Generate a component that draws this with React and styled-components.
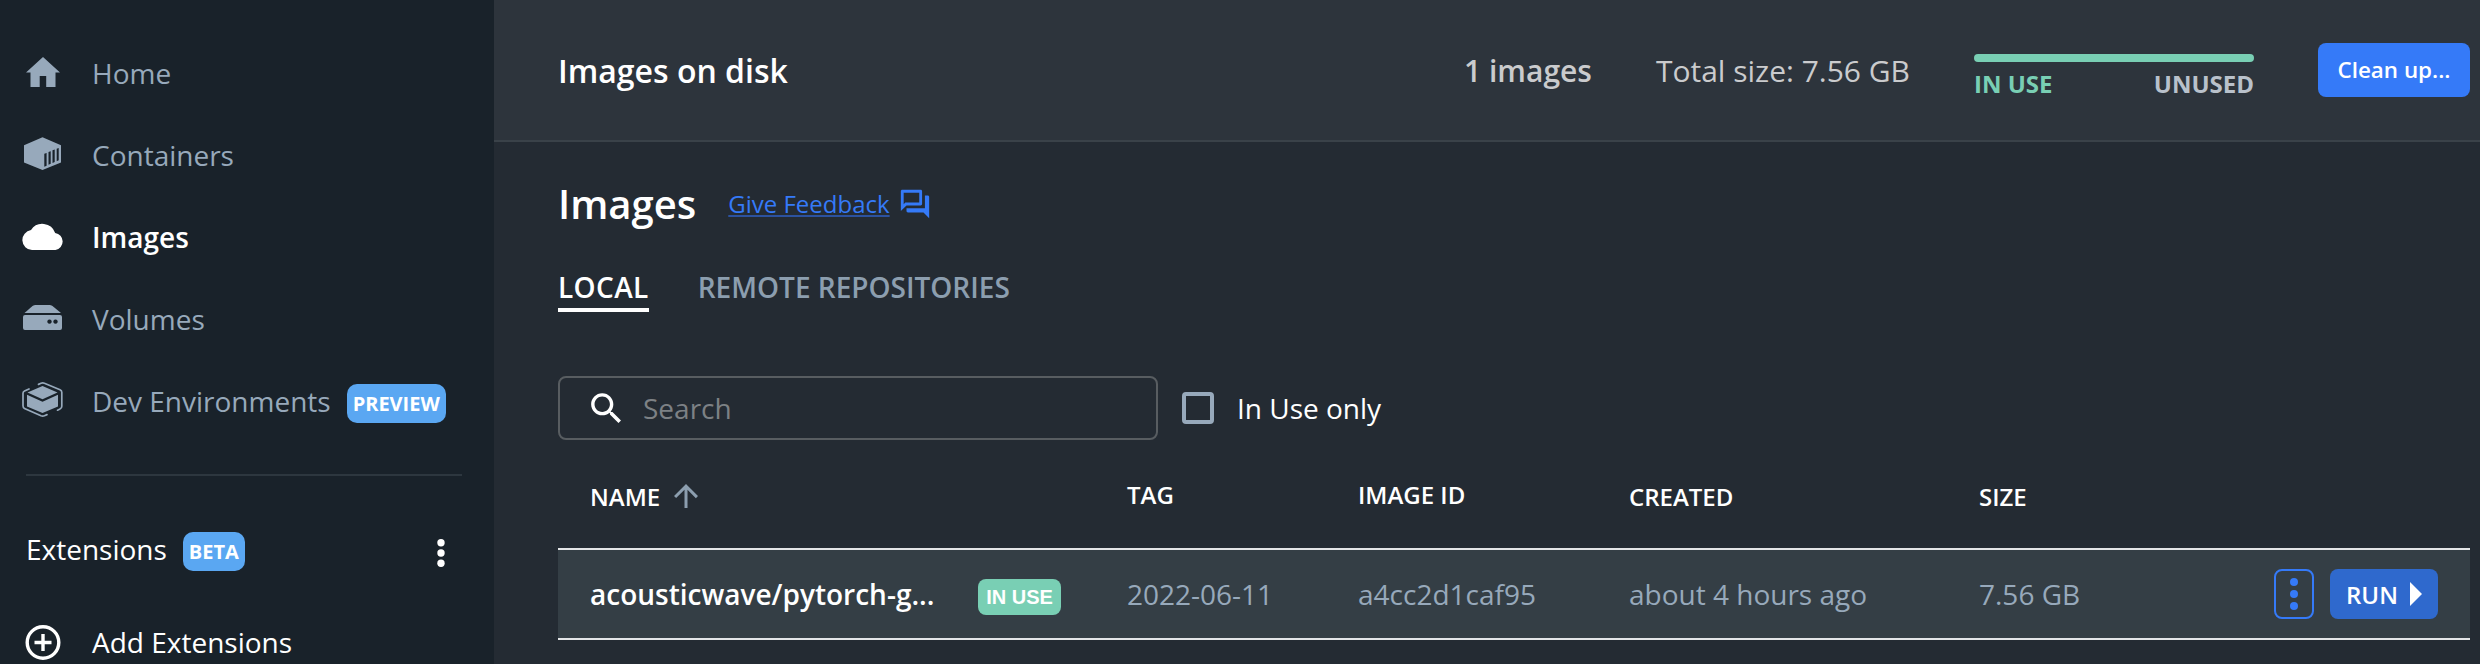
import React from "react";
import styled, { createGlobalStyle } from "styled-components";

const GlobalStyle = createGlobalStyle`
  *, *::before, *::after { box-sizing: border-box; }
  body {
    margin: 0;
    background: #242b33;
    color: #fff;
    font-family: "Open Sans", "Liberation Sans", sans-serif;
    font-size: 28px;
    overflow: hidden;
  }
  h1, h2, p { margin: 0; }
`;

const Shell = styled.div`
  display: flex;
  width: 2480px;
  height: 664px;
  overflow: hidden;
`;

/* Sidebar */
const Sidebar = styled.aside`
  flex: none;
  width: 494px;
  background: #19222a;
  padding-top: 32px;
`;

const NavItem = styled.div`
  display: flex;
  align-items: center;
  height: 82px;
  padding-left: 22px;
  color: ${(p) => (p.$active ? "#fff" : "#97a9bb")};
  font-weight: ${(p) => (p.$active ? 600 : 400)};
  white-space: nowrap;
`;

const NavIcon = styled.svg`
  flex: none;
  width: 42px;
  height: 42px;
  margin-right: 28px;
`;

const NavLabel = styled.span`
  white-space: nowrap;
`;

const BlueTag = styled.span`
  display: flex;
  align-items: center;
  justify-content: center;
  width: ${(p) => p.$width}px;
  height: 39px;
  margin: 5px 0 0 16px;
  border-radius: 10px;
  background: #5aa7f2;
  color: #fff;
  font-size: 20px;
  font-weight: 700;
`;

const Divider = styled.div`
  height: 2px;
  margin: 32px 32px 0 26px;
  background: #2d373f;
`;

const ExtensionsRow = styled.div`
  display: flex;
  align-items: center;
  height: 78px;
  margin-top: 34px;
  padding: 0 47px 0 26px;
`;

const DotsIcon = styled.svg`
  width: 12px;
  height: 32px;
  margin: 8px 0 0 auto;
`;

const AddRow = styled(NavItem)`
  height: 82px;
  margin-top: 13px;
  color: #fff;
`;

/* Header bar */
const Main = styled.main`
  flex: 1;
  min-width: 0;
`;

const TopBar = styled.header`
  display: flex;
  align-items: center;
  height: 142px;
  padding: 0 10px 0 64px;
  background: #2d343c;
  border-bottom: 2px solid #3a4249;
  white-space: nowrap;
`;

const TopTitle = styled.h2`
  font-size: 32px;
  font-weight: 600;
`;

const Stat = styled.span`
  font-size: 30px;
  font-weight: ${(p) => (p.$strong ? 600 : 400)};
  color: #cacbcd;
  margin-left: ${(p) => (p.$first ? "auto" : "64px")};
`;

const Usage = styled.div`
  width: 280px;
  height: 46px;
  margin: 14px 64px 0 64px;
`;

const UsageBar = styled.div`
  height: 8px;
  border-radius: 4px;
  background: #79cfb4;
`;

const UsageLabels = styled.div`
  display: flex;
  justify-content: space-between;
  padding-top: 6px;
  line-height: 32px;
  font-size: 24px;
  font-weight: 700;
  color: #b9c1cb;
`;

const InUseLabel = styled.span`
  color: #79cfb4;
`;

const CleanButton = styled.button`
  width: 152px;
  height: 54px;
  padding: 0 0 1px;
  border: 0;
  border-radius: 8px;
  background: #357af8;
  color: #fff;
  font: 600 22.4px "Open Sans", sans-serif;
`;

/* Content */
const Content = styled.div`
  padding: 0 10px 0 64px;
`;

const Heading = styled.div`
  display: flex;
  align-items: center;
  height: 124px;
`;

const Title = styled.h1`
  font-size: 40px;
  font-weight: 600;
  line-height: 54px;
`;

const FeedbackLink = styled.a`
  display: flex;
  align-items: center;
  margin-left: 32px;
  color: #357af8;
  font-size: 24px;
  line-height: 34px;
`;

const FeedbackText = styled.span`
  text-decoration: underline;
  text-decoration-color: #2c529f;
  text-decoration-thickness: 2px;
  text-underline-offset: 2px;
`;

const ForumIcon = styled.svg`
  width: 34px;
  height: 34px;
  margin-left: 8px;
`;

const Tabs = styled.div`
  display: flex;
  gap: 49px;
  height: 46px;
`;

const Tab = styled.div`
  height: 46px;
  line-height: 42px;
  font-weight: 600;
  letter-spacing: ${(p) => (p.$active ? 0.4 : 0)}px;
  color: ${(p) => (p.$active ? "#fff" : "#8c9eaf")};
  border-bottom: 4px solid ${(p) => (p.$active ? "#fff" : "transparent")};
`;

const Filters = styled.div`
  display: flex;
  align-items: center;
  height: 64px;
  margin-top: 64px;
`;

const SearchBox = styled.div`
  display: flex;
  align-items: center;
  width: 600px;
  height: 64px;
  padding-left: 26px;
  border: 2px solid #585d61;
  border-radius: 8px;
  color: #7d8185;
`;

const SearchIcon = styled.svg`
  width: 41px;
  height: 41px;
  margin-right: 16px;
`;

const CheckBox = styled.span`
  width: 32px;
  height: 32px;
  margin: 0 23px 0 24px;
  border: 4px solid #97a9bb;
  border-radius: 4px;
`;

const Columns = styled.div`
  display: grid;
  grid-template-columns: 537px 231px 271px 350px 1fr auto;
  align-items: center;
  padding: 0 32px;
`;

const TableHead = styled(Columns)`
  height: 108px;
  font-size: 24px;
  font-weight: 600;
`;

const HeadCell = styled.div`
  display: flex;
  align-items: center;
  padding-top: ${(p) => (p.$sortable ? 4 : 0)}px;
`;

const ArrowIcon = styled.svg`
  width: 36px;
  height: 36px;
  margin-left: 8px;
`;

const TableRow = styled(Columns)`
  height: 92px;
  background: #343e45;
  border: solid #e3e5e7;
  border-width: 2px 0;
  color: #97a9bb;
`;

const NameCell = styled.div`
  display: flex;
  align-items: center;
  color: #fff;
  font-weight: 600;
`;

const ImageName = styled.span`
  width: 388px;
`;

const StatusTag = styled.span`
  display: flex;
  align-items: center;
  justify-content: center;
  width: 83px;
  height: 36px;
  margin-top: 6px;
  border-radius: 8px;
  background: #79cfb4;
  color: #fff;
  font: 700 20px "Liberation Sans", Arial, sans-serif;
`;

const Actions = styled.div`
  display: flex;
  gap: 16px;
`;

const MoreButton = styled.button`
  display: flex;
  align-items: center;
  justify-content: center;
  width: 40px;
  height: 50px;
  padding: 0;
  border: 2px solid #357af8;
  border-radius: 8px;
  background: transparent;
`;

const RunButton = styled.button`
  display: flex;
  align-items: center;
  justify-content: space-between;
  width: 108px;
  height: 50px;
  padding: 0 16px;
  border: 0;
  border-radius: 8px;
  background: #2f69cd;
  color: #fff;
  font: 600 24px "Open Sans", sans-serif;
`;

const HomeGlyph = () => (
  <NavIcon viewBox="0 0 42 42" fill="currentColor">
    <path d="M21 5 38 20.500h-4.500V35h-9.300V24h-6.500v11H8.500V20.500H4z" />
  </NavIcon>
);

const ContainersGlyph = () => (
  <NavIcon viewBox="0 0 42 42" fill="currentColor">
    <path
      fillRule="evenodd"
      d="M20.500 3.300 39 11.200V28.500L20.500 36 2 28.500V11.200zM22.300 19.700v13l2.300-1V18.900zM26.500 18v12.700l2.200-1V17.200zM30.500 16.200v12.700l2.200-1V15.400zM34.700 14.700V27.200l2-1V14z"
    />
  </NavIcon>
);

const CloudGlyph = () => (
  <NavIcon viewBox="0 0 42 42" fill="currentColor">
    <path d="M10 34A10 10 0 0 1 9 14.100 13.500 13.500 0 0 1 33.200 17 8.600 8.600 0 0 1 33.500 34z" />
  </NavIcon>
);

const VolumesGlyph = () => (
  <NavIcon viewBox="0 0 42 42" fill="currentColor">
    <path d="M2.500 15 10.500 8Q12 7 13.500 7h14Q29 7 30.500 8L39 15z" />
    <path
      fillRule="evenodd"
      d="M3 17h35q2 0 2 2V30q0 2-2 2H3q-2 0-2-2V19q0-2 2-2zM27.500 21.400a2.200 2.200 0 1 0 .01 0zM33.500 21.400a2.200 2.200 0 1 0 .01 0z"
    />
  </NavIcon>
);

const DevGlyph = () => (
  <NavIcon viewBox="0 0 42 42" fill="currentColor">
    <path d="M20.500 6 35.500 12.500 20.500 19.200 5.500 12.500z" />
    <path d="M5 14.800 20.500 21.800 36 14.800V26.500L20.500 33 5 26.500z" />
    <g fill="none" stroke="currentColor" strokeWidth="1.700" strokeLinecap="round">
      <path d="M16.500 4.400 19 3.300q1.700-.7 3.400 0L38 9.800Q39.800 10.700 39.800 12.200V26.200Q39.800 28.200 38 29L35.500 30.200" />
      <path d="M7 9 2.500 11Q1 11.700 1 13.200V25.700Q1 27.700 2.500 28.400L19 35.700q1.700.7 3.400 0L25 34.600" />
    </g>
  </NavIcon>
);

const AddGlyph = () => (
  <NavIcon viewBox="0 0 42 42" fill="none" stroke="currentColor">
    <circle cx="21" cy="21.500" r="15.800" strokeWidth="3.400" />
    <path d="M21 13v17M12.500 21.500h17" strokeWidth="3.400" />
  </NavIcon>
);

export default function App() {
  return (
    <>
      <GlobalStyle />
      <Shell>
        <Sidebar>
          <NavItem>
            <HomeGlyph />
            <NavLabel>Home</NavLabel>
          </NavItem>
          <NavItem>
            <ContainersGlyph />
            <NavLabel>Containers</NavLabel>
          </NavItem>
          <NavItem $active>
            <CloudGlyph />
            <NavLabel>Images</NavLabel>
          </NavItem>
          <NavItem>
            <VolumesGlyph />
            <NavLabel>Volumes</NavLabel>
          </NavItem>
          <NavItem>
            <DevGlyph />
            <NavLabel>Dev Environments</NavLabel>
            <BlueTag $width={99}>PREVIEW</BlueTag>
          </NavItem>
          <Divider />
          <ExtensionsRow>
            <NavLabel>Extensions</NavLabel>
            <BlueTag $width={62}>BETA</BlueTag>
            <DotsIcon viewBox="0 0 12 32" fill="#fff">
              <circle cx="6" cy="5.700" r="3.700" />
              <circle cx="6" cy="16" r="3.700" />
              <circle cx="6" cy="26.300" r="3.700" />
            </DotsIcon>
          </ExtensionsRow>
          <AddRow>
            <AddGlyph />
            <NavLabel>Add Extensions</NavLabel>
          </AddRow>
        </Sidebar>
        <Main>
          <TopBar>
            <TopTitle>Images on disk</TopTitle>
            <Stat $first $strong>1 images</Stat>
            <Stat>Total size: 7.56 GB</Stat>
            <Usage>
              <UsageBar />
              <UsageLabels>
                <InUseLabel>IN USE</InUseLabel>
                <span>UNUSED</span>
              </UsageLabels>
            </Usage>
            <CleanButton>Clean up...</CleanButton>
          </TopBar>
          <Content>
            <Heading>
              <Title>Images</Title>
              <FeedbackLink>
                <FeedbackText>Give Feedback</FeedbackText>
                <ForumIcon viewBox="0 0 24 24" fill="currentColor">
                  <path d="M15 4v7H5.170L4 12.170V4h11m1-2H3c-.55 0-1 .45-1 1v14l4-4h10c.55 0 1-.45 1-1V3c0-.55-.45-1-1-1zm5 4h-2v9H6v2c0 .55.45 1 1 1h11l4 4V7c0-.55-.45-1-1-1z" />
                </ForumIcon>
              </FeedbackLink>
            </Heading>
            <Tabs>
              <Tab $active>LOCAL</Tab>
              <Tab>REMOTE REPOSITORIES</Tab>
            </Tabs>
            <Filters>
              <SearchBox>
                <SearchIcon viewBox="0 0 24 24" fill="#fff">
                  <path d="M15.500 14h-.79l-.28-.27C15.410 12.590 16 11.110 16 9.500 16 5.910 13.090 3 9.500 3S3 5.910 3 9.500 5.910 16 9.500 16c1.610 0 3.090-.59 4.230-1.570l.27.28v.79l5 4.990L20.490 19l-4.990-5zm-6 0C7.010 14 5 11.990 5 9.500S7.010 5 9.500 5 14 7.010 14 9.500 11.990 14 9.500 14z" />
                </SearchIcon>
                <span>Search</span>
              </SearchBox>
              <CheckBox />
              <span>In Use only</span>
            </Filters>
            <TableHead>
              <HeadCell $sortable>
                NAME
                <ArrowIcon viewBox="0 0 24 24" fill="#8c9eaf">
                  <path d="m4 12 1.410 1.410L11 7.830V20h2V7.830l5.580 5.590L20 12l-8-8-8 8z" />
                </ArrowIcon>
              </HeadCell>
              <HeadCell>TAG</HeadCell>
              <HeadCell>IMAGE ID</HeadCell>
              <HeadCell $sortable>CREATED</HeadCell>
              <HeadCell $sortable>SIZE</HeadCell>
            </TableHead>
            <TableRow>
              <NameCell>
                <ImageName>acousticwave/pytorch-g...</ImageName>
                <StatusTag>IN USE</StatusTag>
              </NameCell>
              <span>2022-06-11</span>
              <span>a4cc2d1caf95</span>
              <span>about 4 hours ago</span>
              <span>7.56 GB</span>
              <Actions>
                <MoreButton>
                  <svg width="8" height="32" viewBox="0 0 8 32" fill="#357af8">
                    <circle cx="4" cy="4" r="4" />
                    <circle cx="4" cy="16" r="4" />
                    <circle cx="4" cy="28" r="4" />
                  </svg>
                </MoreButton>
                <RunButton>
                  RUN
                  <svg width="12" height="24" viewBox="0 0 12 24" fill="#fff">
                    <path d="M0 0 12 12 0 24z" />
                  </svg>
                </RunButton>
              </Actions>
            </TableRow>
          </Content>
        </Main>
      </Shell>
    </>
  );
}
